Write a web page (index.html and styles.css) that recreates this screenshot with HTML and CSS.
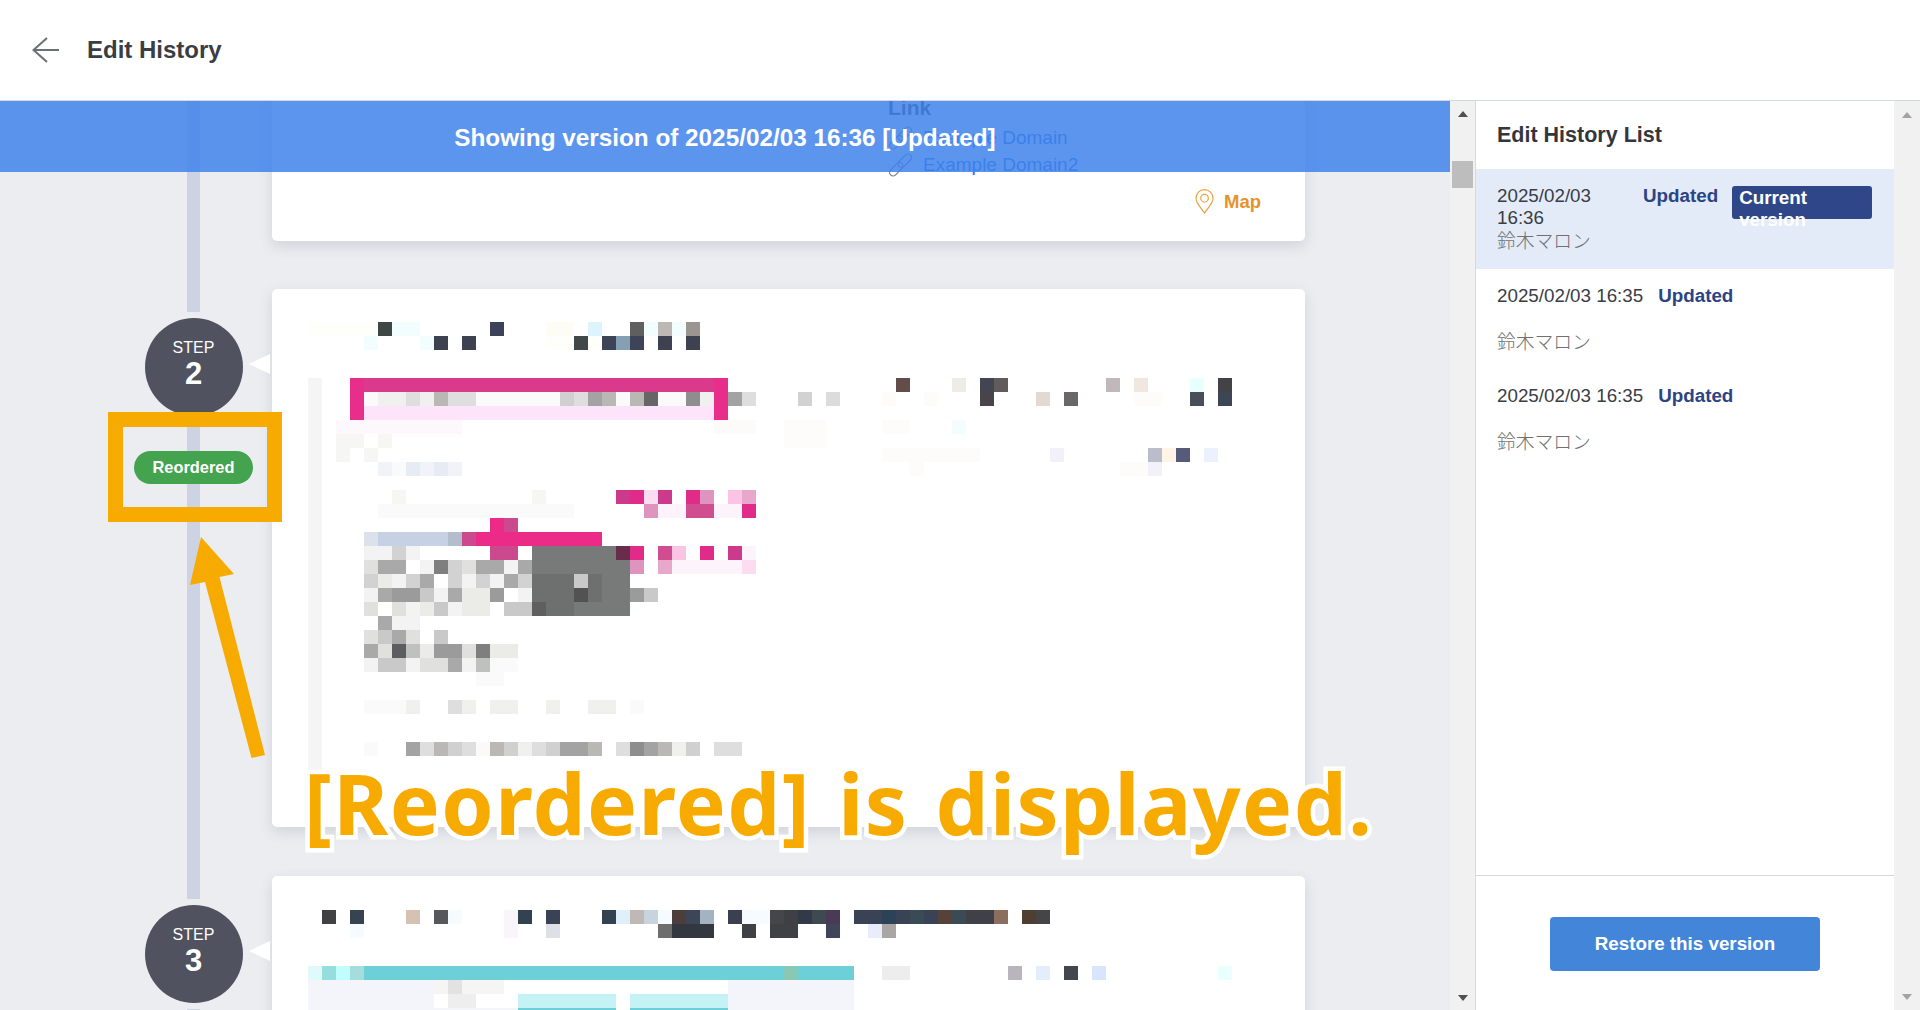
FILE: index.html
```html
<!DOCTYPE html>
<html lang="en">
<head>
<meta charset="utf-8">
<title>Edit History</title>
<link rel="stylesheet" href="styles.css">
</head>
<body>
<header class="topbar">
  <svg class="back" viewBox="0 0 27 26"><path d="M15 1 1.5 13 15 25M1.5 13H27"/></svg>
  <h1>Edit History</h1>
</header>
<div class="body-row">
  <main class="main">
    <section class="step">
      <div class="rail"><div class="line"></div></div>
      <div class="card card-first">
        <div class="links">
          <h3>Link</h3>
          <div class="link-row">
            <svg class="chain" viewBox="0 0 25 24"><g transform="rotate(-45 12.5 12)"><rect x="-1.500" y="8.500" width="16" height="7" rx="3.500"/><rect x="10.500" y="8.500" width="16" height="7" rx="3.500"/></g></svg>
            <a>Example Domain</a>
          </div>
          <div class="link-row">
            <svg class="chain" viewBox="0 0 25 24"><g transform="rotate(-45 12.5 12)"><rect x="-1.500" y="8.500" width="16" height="7" rx="3.500"/><rect x="10.500" y="8.500" width="16" height="7" rx="3.500"/></g></svg>
            <a>Example Domain2</a>
          </div>
        </div>
        <div class="map">
          <svg viewBox="0 0 19 25"><path d="M9.5 24C6 18.5 1 14.5 1 9.2A8.5 8.5 0 0 1 18 9.2C18 14.5 13 18.5 9.5 24Z"/><circle cx="9.5" cy="9.2" r="3.8"/></svg>
          <span>Map</span>
        </div>
      </div>
    </section>

    <section class="step">
      <div class="rail">
        <div class="line line-top"></div>
        <div class="circle"><span class="step-word">STEP</span><span class="step-num">2</span></div>
        <div class="line line-rest"></div>
        <span class="badge">Reordered</span>
      </div>
      <div class="card card-tall">
        <svg class="mosaic" viewBox="20 20.5 72 38" width="1008" height="532">
          <path stroke="#f5f5f5" d="M22.5 26.5v28"/>
          <path stroke="#fefefa" d="M22 23h5M39 24h4"/>
          <path stroke="#3f4746" d="M27 23h1"/>
          <path stroke="#f2fefe" d="M28 23h2M46 23h1M48 23h1M26 24h1M30 24h1"/>
          <path stroke="#fdfdf6" d="M39 23h2"/>
          <path stroke="#3c4258" d="M35 23h1"/>
          <path stroke="#def4fd" d="M42 23h1"/>
          <path stroke="#5f5f5f" d="M45 23h1"/>
          <path stroke="#bdb7b5" d="M47 23h1"/>
          <path stroke="#9b9491" d="M49 23h1"/>
          <path stroke="#3e4250" d="M31 24h1M33 24h1M47 24h1M49 24h1"/>
          <path stroke="#404849" d="M41 24h1"/>
          <path stroke="#3d4458" d="M43 24h1M45 24h1"/>
          <path stroke="#84a0b2" d="M44 24h1"/>
          <path stroke="#da3a8c" d="M26 27h25"/>
          <path stroke="#e62e8a" d="M25 27h1M25 28h1M25 29h1M51 27h1M51 28h1M51 29h1"/>
          <path stroke="#fde4fa" d="M26 29h25"/>
          <path stroke="#fafafa" d="M26 28h1M34 28h3M44 28h1M47 28h2M37 28h3M27 36h14M35 47h2M34 48h2M26 50h3M45 50h1M34 53h1M26 53h1"/>
          <path stroke="#f0f0ee" d="M27 28h2M30 28h1M50 28h1M29 50h1M33 50h1M35 50h2M39 50h1M42 50h2M37 53h1M48 53h1"/>
          <path stroke="#dedede" d="M29 28h1M32 28h2M41 28h1M53 28h1M32 50h1M30 53h1M33 53h1M38 53h1M44 53h1M51 53h2"/>
          <path stroke="#b9b8b4" d="M31 28h1M43 28h1M45 28h1M31 53h1M35 53h1M42 53h1M47 53h1"/>
          <path stroke="#d0d0d0" d="M40 28h1M32 53h1M36 53h1M39 53h1M49 53h1"/>
          <path stroke="#a3a3a3" d="M42 28h1M52 28h1M29 53h1M40 53h2M46 53h1"/>
          <path stroke="#666666" d="M46 28h1"/>
          <path stroke="#8e8e8e" d="M49 28h1M45 53h1"/>
          <path stroke="#fdf8fc" d="M24 30h9"/>
          <path stroke="#fcfbfa" d="M51 30h3"/>
          <path stroke="#f6f6f5" d="M24 31h2M27 31h1M24 32h1M26 32h1M28 35h1M38 35h1"/>
          <path stroke="#f1f3f9" d="M27 33h1M30 33h1M32 33h1"/>
          <path stroke="#e7ebf4" d="M29 33h1M31 33h1"/>
          <path stroke="#f8fafc" d="M28 33h1"/>
          <path stroke="#cc3a8c" d="M44 35h1M47 35h1M52 39h1"/>
          <path stroke="#e02c88" d="M45 35h1M49 35h1M45 39h1M50 39h1M53 36h1"/>
          <path stroke="#fcdcf0" d="M46 35h1M53 40h1"/>
          <path stroke="#de94bf" d="M50 35h1M46 36h1M45 40h1"/>
          <path stroke="#fcc4e4" d="M52 35h1M48 39h1"/>
          <path stroke="#e8a8cc" d="M53 35h1M47 40h1"/>
          <path stroke="#d04d90" d="M49 36h2M47 39h1"/>
          <path stroke="#fdf3fb" d="M47 36h2M51 36h2M53 39h1M48 40h5"/>
          <path stroke="#ec2a88" d="M34 38h9M35 37h1"/>
          <path stroke="#cb4a8e" d="M36 37h1M33 38h1M35 39h2"/>
          <path stroke="#c6d2e3" d="M27 38h5"/>
          <path stroke="#dce1ec" d="M26 38h1"/>
          <path stroke="#b4bdcb" d="M32 38h1"/>
          <path stroke="#f3f3f3" d="M26 39h2M29 39h1M30 40h1M36 40h1M28 41h1M33 41h1M35 41h1M26 42h1M31 42h1M37 42h1M29 43h1M32 43h1M28 44h2M26 47h1M29 47h1M33 47h1"/>
          <path stroke="#d2d2d2" d="M28 39h1M26 41h1M32 40h1M29 41h1M32 41h1M37 41h1M34 41h1"/>
          <path stroke="#787a7a" d="M38 39h6M38 40h7M41 43h4M43 41h2M43 42h2"/>
          <path stroke="#682d4b" d="M44 39h1"/>
          <path stroke="#e0e0de" d="M26 40h1M33 40h1M26 43h1M28 43h1M26 45h1M29 45h1M27 46h1M33 46h1M30 47h2"/>
          <path stroke="#a9a9a9" d="M27 40h2M34 40h2M37 40h1M30 41h1M36 41h1M27 42h1M32 42h1M27 44h1M28 45h1M26 46h1M32 47h1"/>
          <path stroke="#7f7f7f" d="M31 40h1M34 46h1"/>
          <path stroke="#ebebe8" d="M27 41h1M33 42h2M33 43h2M30 43h1M35 46h2M30 46h1"/>
          <path stroke="#6e6f6f" d="M38 41h3M42 41h1M38 42h3M39 43h2M42 42h1"/>
          <path stroke="#c9c9c9" d="M41 41h1M30 42h1M36 43h2M46 42h1M31 45h1M31 43h1M27 45h1M27 47h2"/>
          <path stroke="#525252" d="M41 42h1"/>
          <path stroke="#5f5f5f" d="M38 43h1"/>
          <path stroke="#9b9b9b" d="M28 42h2M35 42h1M45 42h1M31 46h2"/>
          <path stroke="#5d5d61" d="M28 46h1"/>
          <path stroke="#bfc1bf" d="M29 46h1M34 47h1"/>
          <path stroke="#634d4a" d="M64 27h1"/>
          <path stroke="#eeece6" d="M68 27h1"/>
          <path stroke="#434553" d="M70 27h1"/>
          <path stroke="#615b5e" d="M71 27h1"/>
          <path stroke="#c0b8ba" d="M79 27h1"/>
          <path stroke="#f0e8e0" d="M81 27h1"/>
          <path stroke="#e8ffff" d="M85 27h1"/>
          <path stroke="#f4fdfe" d="M68 30h1"/>
          <path stroke="#434246" d="M87 27h1"/>
          <path stroke="#d2d2d2" d="M57 28h1"/>
          <path stroke="#dcdcdc" d="M59 28h1"/>
          <path stroke="#494449" d="M70 28h1"/>
          <path stroke="#e3d9d0" d="M74 28h1"/>
          <path stroke="#6a6769" d="M76 28h1"/>
          <path stroke="#47505a" d="M85 28h1"/>
          <path stroke="#3d4654" d="M87 28h1"/>
          <path stroke="#fdfcfb" d="M63 28h1M66 28h1M81 28h2M56 30h3M63 30h2M56 31h3M63 32h7M65 33h1M80 33h2"/>
          <path stroke="#f2f0f8" d="M75 32h1M82 33h1"/>
          <path stroke="#bcbdcc" d="M82 32h1"/>
          <path stroke="#fff4e6" d="M83 32h1"/>
          <path stroke="#555b78" d="M84 32h1"/>
          <path stroke="#ecf2fd" d="M86 32h1"/>
        </svg>
      </div>
    </section>

    <section class="step">
      <div class="rail">
        <div class="line line-top"></div>
        <div class="circle"><span class="step-word">STEP</span><span class="step-num">3</span></div>
        <div class="line line-rest"></div>
      </div>
      <div class="card card-tall card-last">
        <svg class="mosaic" viewBox="20 64.5 72 8" width="1008" height="112">
          <path stroke="#414042" d="M23 65h1"/>
          <path stroke="#384351" d="M25 65h1"/>
          <path stroke="#d6c1b3" d="M29 65h1"/>
          <path stroke="#56585c" d="M31 65h1"/>
          <path stroke="#334250" d="M37 65h1M43 65h1"/>
          <path stroke="#3a4256" d="M39 65h1"/>
          <path stroke="#e0f0fa" d="M44 65h1"/>
          <path stroke="#c0b8b4" d="M45 65h1"/>
          <path stroke="#c8d4dd" d="M46 65h1"/>
          <path stroke="#f5fbfe" d="M32 65h1M47 65h1M25 66h1M53 65h2"/>
          <path stroke="#faf5fa" d="M36 65h1M36 66h1"/>
          <path stroke="#4c3e3a" d="M48 65h1"/>
          <path stroke="#3c4656" d="M49 65h1"/>
          <path stroke="#a4b3c2" d="M50 65h1"/>
          <path stroke="#3c3f50" d="M52 65h1"/>
          <path stroke="#44464c" d="M55 65h1"/>
          <path stroke="#3f4046" d="M56 65h1"/>
          <path stroke="#333a47" d="M57 65h1"/>
          <path stroke="#3f4a50" d="M58 65h1"/>
          <path stroke="#4a3a55" d="M59 65h1"/>
          <path stroke="#3a4256" d="M61 65h4M66 65h1"/>
          <path stroke="#2c4256" d="M63 65h1"/>
          <path stroke="#3a4b56" d="M65 65h1M68 65h1"/>
          <path stroke="#564238" d="M67 65h1"/>
          <path stroke="#404048" d="M69 65h2"/>
          <path stroke="#8a6f5e" d="M71 65h1"/>
          <path stroke="#4e3f30" d="M73 65h1"/>
          <path stroke="#454548" d="M74 65h1"/>
          <path stroke="#dfe0e6" d="M39 66h1"/>
          <path stroke="#6e6e6e" d="M47 66h1"/>
          <path stroke="#33373f" d="M48 66h3"/>
          <path stroke="#404145" d="M53 66h1M55 66h2"/>
          <path stroke="#42445a" d="M59 66h1"/>
          <path stroke="#e9edfb" d="M62 66h1"/>
          <path stroke="#aaa6a6" d="M63 66h1"/>
          <path stroke="#e0fafc" d="M22 69h1"/>
          <path stroke="#94dedd" d="M23 69h1"/>
          <path stroke="#c0fdfd" d="M24 69h1"/>
          <path stroke="#a7dcdc" d="M25 69h1"/>
          <path stroke="#6dd0d8" d="M26 69h30M57 69h4"/>
          <path stroke="#88c8b4" d="M56 69h1"/>
          <path stroke="#eeeded" d="M63 69h2"/>
          <path stroke="#b8b6bc" d="M72 69h1"/>
          <path stroke="#e4eefb" d="M74 69h1"/>
          <path stroke="#44464f" d="M76 69h1"/>
          <path stroke="#d8e6fb" d="M78 69h1"/>
          <path stroke="#eaffff" d="M87 69h1"/>
          <path stroke="#f3f5fa" d="M22 70h9M22 71h9M22 72h15M52 71h9M52 72h9M52 70h9"/>
          <path stroke="#e2e2e2" d="M32 70h1"/>
          <path stroke="#f5f5f3" d="M31 70h1M33 70h3"/>
          <path stroke="#eeeeee" d="M32 71h2"/>
          <path stroke="#c5f2f5" d="M37 71h7M45 71h7"/>
          <path stroke="#6dd0d8" d="M37 72h7M45 72h7"/>
        </svg>
      </div>
    </section>

    <div class="banner">Showing version of 2025/02/03 16:36 [Updated]</div>

    <div class="note-box"></div>
    <svg class="note-arrow" viewBox="185 530 85 235"><path d="M201 537 234 574 219.500 577 265 755 251.500 758 205 582 190 585Z"/></svg>
    <div class="note-text">[Reordered] is displayed.</div>
  </main>

  <div class="scroll scroll-inner">
    <span class="arrow-up"></span>
    <span class="thumb"></span>
    <span class="arrow-down"></span>
  </div>

  <aside class="side">
    <h2>Edit History List</h2>
    <ul class="versions">
      <li class="version version-current">
        <div class="meta">
          <span class="date">2025/02/03 16:36</span>
          <span class="state">Updated</span>
          <span class="current">Current version</span>
        </div>
        <div class="name">鈴木マロン</div>
      </li>
      <li class="version">
        <div class="meta"><span class="date">2025/02/03 16:35</span><span class="state">Updated</span></div>
        <div class="name">鈴木マロン</div>
      </li>
      <li class="version">
        <div class="meta"><span class="date">2025/02/03 16:35</span><span class="state">Updated</span></div>
        <div class="name">鈴木マロン</div>
      </li>
    </ul>
    <div class="side-foot"><button class="restore">Restore this version</button></div>
  </aside>

  <div class="scroll scroll-outer">
    <span class="arrow-up"></span>
    <span class="arrow-down"></span>
  </div>
</div>
</body>
</html>
```
FILE: styles.css
```css
* { box-sizing: border-box; }
html, body { margin: 0; height: 1010px; overflow: hidden; background: #fff; }
body { font-family: "Liberation Sans", Arial, sans-serif; color: #3a3d44; display: flex; flex-direction: column; }

.topbar { height: 101px; flex: none; display: flex; align-items: center; gap: 28px; padding: 0 0 1px 32px; border-bottom: 1px solid #d3d9de; background: #fff; }
.back { width: 27px; height: 26px; fill: none; stroke: #6c6f77; stroke-width: 2; }
.topbar h1 { margin: 0; font-size: 24px; font-weight: 700; color: #3a3d44; }

.body-row { flex: 1; display: flex; min-height: 0; }

.main { flex: 1; position: relative; overflow: hidden; background: #ebedf1; }
.step { display: flex; align-items: stretch; }
.rail { width: 272px; flex: none; padding-left: 115px; display: flex; flex-direction: column; align-items: center; position: relative; }
.line { width: 13px; flex: 1; background: #ced3e3; }
.line-top { flex: none; height: 23px; }
.circle { width: 98px; height: 98px; margin: 5.500px 0 6px; border-radius: 50%; background: #50525f; color: #fff; display: flex; flex-direction: column; align-items: center; padding-top: 19px; flex: none; }
.step-word { font-size: 16px; line-height: 22px; }
.step-num { font-size: 31px; line-height: 30px; font-weight: 700; }
.badge { position: absolute; left: 134px; top: 162px; width: 119px; height: 33px; border-radius: 17px; background: #43a34e; color: #fff; font-size: 16.400px; font-weight: 700; display: flex; align-items: center; justify-content: center; }

.card { width: 1033px; flex: none; margin-bottom: 49px; background: #fff; border-radius: 5px; box-shadow: 0 5px 14px rgba(70, 75, 95, .16); position: relative; }
.card-first { height: 140px; margin-bottom: 48px; border-radius: 0 0 5px 5px; }
.card-tall { height: 538px; padding: 5px 0 0 8px; }
.card-tall::before { content: ""; position: absolute; left: -23px; top: 65px; border-style: solid; border-width: 10px 21px 10px 0; border-color: transparent #fff transparent transparent; }
.card-last { padding-top: 34px; margin-bottom: 0; }
.mosaic { display: block; shape-rendering: crispEdges; }
.mosaic path { fill: none; stroke-width: 1; }

.links { padding-left: 616px; }
.links h3 { margin: 0 0 9px; font-size: 21px; line-height: 14px; font-weight: 700; color: #3f4450; }
.link-row { height: 27px; display: flex; align-items: center; gap: 10px; font-size: 19px; color: #2670e0; }
.chain { width: 25px; height: 24px; flex: none; fill: none; stroke: #7d8590; stroke-width: 1.300; }
.map { margin-top: 11px; padding-right: 44px; display: flex; justify-content: flex-end; align-items: center; gap: 10px; color: #e8922a; font-size: 18.500px; font-weight: 700; }
.map svg { width: 19px; height: 25px; fill: none; stroke: #e8a23e; stroke-width: 1.200; }

.banner { position: absolute; left: 0; right: 0; top: 0; height: 71px; padding-top: 2px; display: flex; align-items: center; justify-content: center; background: rgba(63, 130, 235, .85); color: #fff; font-size: 24.300px; font-weight: 700; }

.note-box { position: absolute; left: 108px; top: 311px; width: 174px; height: 110px; border: 15px solid #f7ab00; }
.note-arrow { position: absolute; left: 185px; top: 429px; width: 85px; height: 235px; fill: #f7ab00; }
.note-text { position: absolute; left: 304px; top: 652px; font-family: "Noto Sans", sans-serif; font-size: 84px; line-height: 100px; letter-spacing: 1.400px; word-spacing: 4px; font-weight: 700; color: #f7ab00; white-space: nowrap; -webkit-text-stroke: 9px #fff; paint-order: stroke fill; }

.scroll { flex: none; background: #f1f1f1; display: flex; flex-direction: column; align-items: center; padding: 10px 0 9px; }
.scroll-inner { width: 25px; }
.scroll-outer { width: 26px; padding-top: 11px; padding-bottom: 10px; }
.arrow-up, .arrow-down { width: 0; height: 0; border-style: solid; border-color: transparent; }
.arrow-up { border-width: 0 5.500px 6px; border-bottom-color: #505050; }
.arrow-down { margin-top: auto; border-width: 6px 5.500px 0; border-top-color: #505050; }
.scroll-outer .arrow-up { border-bottom-color: #a3a3a3; }
.scroll-outer .arrow-down { border-top-color: #a3a3a3; }
.thumb { width: 21px; height: 27px; margin-top: 44px; background: #bdbdbd; }

.side { width: 419px; flex: none; border-left: 1px solid #d5d8df; background: #fff; display: flex; flex-direction: column; font-size: 18.800px; }
.side h2 { margin: 0; height: 68px; padding: 0 21px; display: flex; align-items: center; font-size: 21.500px; font-weight: 700; color: #33363d; }
.versions { list-style: none; margin: 0; padding: 0; flex: 1; }
.version { height: 100px; padding: 16px 21px 0; line-height: 22px; }
.meta { display: flex; min-height: 45px; gap: 15px; align-items: flex-start; }
.date { flex: none; }
.state { flex: none; font-weight: 700; color: #2c4484; }
.name { font-family: "Noto Sans CJK JP", "Liberation Sans", sans-serif; color: #707070; font-weight: 300; }
.version-current { background: #e3ebf9; }
.version-current .meta { min-height: 44px; gap: 0; }
.version-current .date { width: 146px; }
.current { width: 140px; height: 33px; margin: 1px 0 0 14px; padding: 1px 7px 0; border-radius: 3px; background: #2f4789; color: #fff; font-weight: 700; }
.side-foot { height: 135px; flex: none; border-top: 1px solid #d5d8df; padding-top: 41px; display: flex; justify-content: center; align-items: flex-start; }
.restore { width: 270px; height: 54px; border: 0; border-radius: 4px; background: #4285d9; color: #fff; font: 700 18.800px "Liberation Sans", Arial, sans-serif; }
```
